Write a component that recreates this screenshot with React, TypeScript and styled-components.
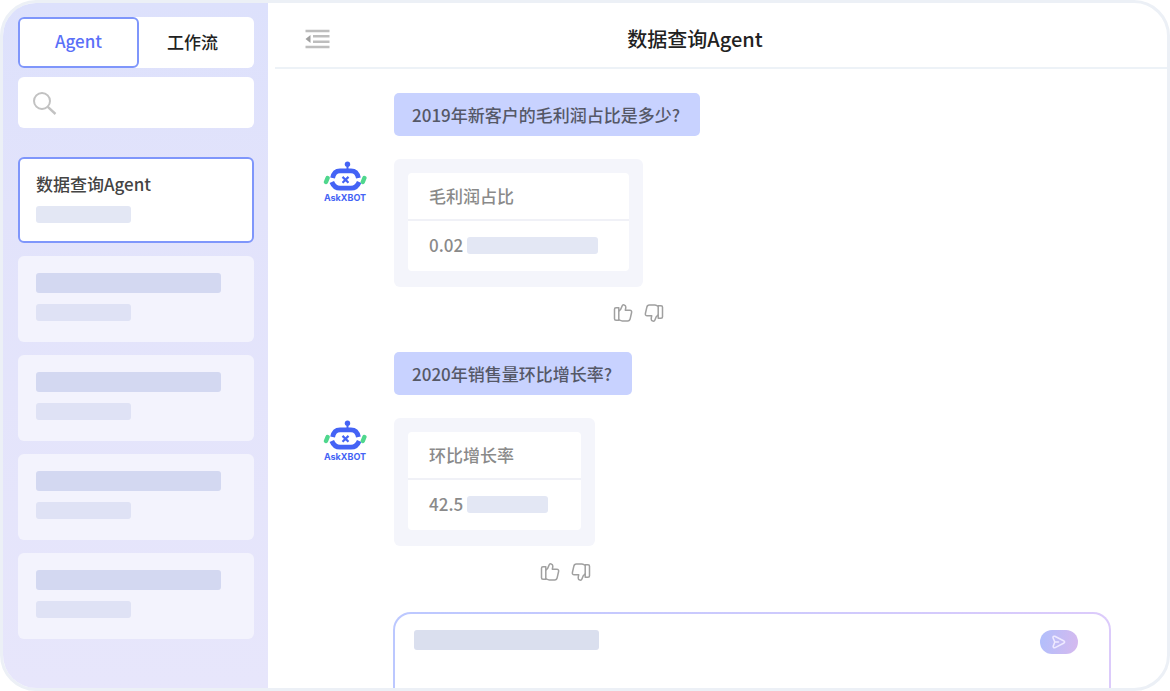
import React from "react";
import styled, { createGlobalStyle } from "styled-components";

const GlobalStyle = createGlobalStyle`
  *, *::before, *::after { box-sizing: border-box; }
  body {
    margin: 0;
    background: #fff;
    font-family: "Noto Sans CJK SC", "Noto Sans", sans-serif;
    font-size: 17px;
    line-height: 24px;
    color: #444;
  }
  button, input, textarea { font: inherit; color: inherit; }
  h1, h2, p { margin: 0; font: inherit; }
`;

const Frame = styled.div`
  display: flex;
  min-height: 100vh;
  border: 3px solid #ecf0f6;
  border-radius: 36px;
  background: #fff;
  overflow: hidden;
`;

const Sidebar = styled.aside`
  flex: 0 0 265px;
  min-width: 0;
  padding: 14px 14px 14px 15px;
  background: linear-gradient(180deg, #dde1fc 0%, #e2e3fb 30%, #e7e6fb 100%);
`;

const Tabs = styled.div`
  display: flex;
  height: 51px;
  border-radius: 6px;
  background: #fff;
`;

const Tab = styled.button<{ $active?: boolean }>`
  flex: ${(p) => (p.$active ? "0 0 121px" : "1")};
  border: ${(p) => (p.$active ? "2px solid #7f96fb" : "0")};
  border-radius: 6px;
  background: transparent;
  color: ${(p) => (p.$active ? "#5a70f8" : "#222")};
  font-weight: 500;
  padding: ${(p) => (p.$active ? "0 0 4px" : "0 8px 2px 0")};
`;

const SearchBox = styled.label`
  display: flex;
  align-items: center;
  gap: 10px;
  height: 51px;
  margin-top: 9px;
  padding: 2px 14px 0;
  border-radius: 6px;
  background: #fff;
`;

const SearchInput = styled.input`
  flex: 1;
  width: 100%;
  min-width: 0;
  border: 0;
  outline: 0;
  background: transparent;
`;

const AgentList = styled.ul`
  display: flex;
  flex-direction: column;
  gap: 13px;
  margin: 29px 0 0;
  padding: 0;
  list-style: none;
`;

const AgentCard = styled.li<{ $active?: boolean }>`
  display: flex;
  flex-direction: column;
  gap: ${(p) => (p.$active ? "10px" : "11px")};
  height: 86px;
  padding: ${(p) => (p.$active ? "13px 16px" : "17px 18px")};
  border: ${(p) => (p.$active ? "2px solid #7f96fb" : "0")};
  border-radius: 6px;
  background: ${(p) => (p.$active ? "#fff" : "#f3f3fd")};
  color: #444;
  font-weight: 500;
`;

const Bar = styled.span<{ $w: number; $h?: number; $tone: string }>`
  display: block;
  width: ${(p) => p.$w}px;
  height: ${(p) => p.$h ?? 17}px;
  border-radius: 3px;
  background: ${(p) => p.$tone};
`;

const Main = styled.main`
  flex: 1;
  min-width: 0;
  display: flex;
  flex-direction: column;
`;

const Header = styled.header`
  display: grid;
  grid-template-columns: 1fr auto 1fr;
  align-items: center;
  height: 66px;
  margin-left: 7px;
  padding: 8px 30px 0;
  border-bottom: 2px solid #edf2f7;
`;

const Title = styled.h1`
  padding-right: 52px;
  font-size: 20px;
  line-height: 28px;
  font-weight: 500;
  color: #222;
`;

const IconButton = styled.button`
  display: flex;
  width: max-content;
  padding: 0;
  border: 0;
  background: none;
  color: #a0a0a0;
`;

const Thread = styled.div`
  display: flex;
  flex-direction: column;
  gap: 29px;
  padding: 24px 56px 0 55px;
`;

const Turn = styled.section`
  display: grid;
  grid-template-columns: 44px 1fr;
  column-gap: 27px;
  justify-items: start;
`;

const Question = styled.p`
  grid-column: 2;
  margin-bottom: 23px;
  padding: 10px 20px 9px 18px;
  border-radius: 5px;
  background: #c8d2ff;
  color: #555867;
  font-weight: 500;
`;

const Avatar = styled.div`
  padding-top: 2px;
  color: #4463f5;
  font-family: Inter, sans-serif;
  font-size: 9px;
  line-height: 10px;
  font-weight: 700;
  text-align: center;

  svg { display: block; margin-bottom: 2px; }
`;

const AnswerCard = styled.div`
  padding: 14px 14px 16px;
  border-radius: 6px;
  background: #f4f5fb;
`;

const AnswerTable = styled.table<{ $w: number }>`
  width: ${(p) => p.$w}px;
  border-spacing: 0;
  border-radius: 4px;
  background: #fff;
  color: #8a8a8a;
  text-align: left;

  th, td { padding: 0 21px; font-weight: 500; }
  th { height: 48px; border-bottom: 2px solid #f0f1f7; }
  td { height: 50px; padding-bottom: 2px; }
`;

const Value = styled.div`
  display: flex;
  align-items: center;
  gap: 4px;
`;

const Feedback = styled.div<{ $indent: number }>`
  grid-column: 2;
  display: flex;
  gap: 11px;
  margin-top: 16px;
  padding-left: ${(p) => p.$indent}px;
`;

const Composer = styled.form`
  flex: 1;
  display: flex;
  align-items: flex-start;
  min-height: 75px;
  margin: 30px 56px 0 125px;
  padding: 16px 31px 0 19px;
  border: 2px solid transparent;
  border-bottom: 0;
  border-radius: 18px 18px 0 0;
  background:
    linear-gradient(#fff, #fff) padding-box,
    linear-gradient(90deg, #bcc8ff, #dccbfb) border-box;
`;

const Field = styled.label`
  flex: 1;
  display: grid;

  & > * { grid-area: 1 / 1; }
`;

const Draft = styled.textarea`
  height: 48px;
  padding: 0;
  border: 0;
  outline: 0;
  resize: none;
  background: transparent;
`;

const Send = styled.button`
  display: flex;
  align-items: center;
  justify-content: center;
  width: 38px;
  height: 24px;
  padding: 0;
  border: 0;
  border-radius: 12px;
  background: linear-gradient(100deg, #b0bffc, #d6b9ee);
  color: #eee9ff;
`;

const SearchIcon = () => (
  <svg width="25" height="25" viewBox="0 0 25 25" fill="none" stroke="#c2c2c2" strokeWidth="2" aria-hidden="true">
    <circle cx="10" cy="10" r="8" />
    <path d="M15.8 15.8 23.5 23" strokeWidth="2.4" />
  </svg>
);

const CollapseIcon = () => (
  <svg width="25" height="20" viewBox="0 0 25 20" aria-hidden="true">
    <path d="M.5 2h24M8 7.3h16.500M8 12.700h16.500M.5 18h24" stroke="#bdbdbd" strokeWidth="2.6" />
    <path d="M.5 10 5.500 6v8z" fill="#a0a0a0" />
  </svg>
);

const ThumbIcon = ({ down = false }: { down?: boolean }) => (
  <svg width="20" height="20" viewBox="0 0 20 20" fill="none" stroke="currentColor" strokeWidth="1.5" strokeLinejoin="round" aria-hidden="true">
    <g transform={down ? "rotate(180 10 10)" : undefined}>
      <path d="M5.800 4.800H3Q1.500 4.800 1.500 6.300V15.800Q1.500 17.300 3 17.300H5.800Z" />
      <path d="M5.800 8C7.800 7 8.600 4.800 9.100 3C9.600 1.300 12.800 1.400 12.800 4C12.800 5.200 12.500 6.200 12.300 7.200H16.800C18.300 7.200 18.900 8.200 18.600 9.500L17.200 15.600C16.900 17 16 17.900 14.700 17.900H9.200C7.800 17.900 7 17.300 5.800 16.800" />
    </g>
  </svg>
);

const BotIcon = () => (
  <svg width="44" height="30" viewBox="0 0 44 30" fill="none" aria-hidden="true">
    <circle cx="24.500" cy="3.200" r="2.700" fill="#4463f5" />
    <g stroke="#4463f5">
      <path d="M24.500 4v5" strokeWidth="2" />
      <path d="M9.600 17C10.400 12.500 13.200 9.800 17 9.800H28C31.800 9.800 34.600 12.500 35.400 17" strokeWidth="4.800" />
      <path d="M8.800 21C10.400 25 13.200 27.200 17 27.200H28C31.800 27.200 34.600 25 36.200 21" strokeWidth="4.800" />
      <path d="M19.500 15.900 25.500 21.700M25.500 15.900 19.500 21.700" strokeWidth="2.200" />
    </g>
    <path d="M4.600 17 3 21M41.400 17 39.800 21" stroke="#4fd78d" strokeWidth="4.400" strokeLinecap="round" />
  </svg>
);

const SendIcon = () => (
  <svg width="16" height="14" viewBox="0 0 16 14" fill="none" stroke="currentColor" strokeWidth="1.600" strokeLinejoin="round" strokeLinecap="round" aria-hidden="true">
    <path d="M3.800 1.300 13 6Q14.200 7 13 8L4.200 12.600Q2 13.300 2.200 11.200L3.800 7 2 2.800Q2 .8 3.800 1.300ZM3.800 7H7.500" />
  </svg>
);

interface Exchange {
  question: string;
  metric: string;
  value: string;
  tableWidth: number;
  barWidth: number;
  feedbackIndent: number;
}

const exchanges: Exchange[] = [
  { question: "2019年新客户的毛利润占比是多少?", metric: "毛利润占比", value: "0.02", tableWidth: 221, barWidth: 131, feedbackIndent: 219 },
  { question: "2020年销售量环比增长率?", metric: "环比增长率", value: "42.5", tableWidth: 173, barWidth: 81, feedbackIndent: 146 },
];

const ExchangeView = ({ item }: { item: Exchange }) => (
  <Turn>
    <Question>{item.question}</Question>
    <Avatar>
      <BotIcon />
      AskXBOT
    </Avatar>
    <AnswerCard>
      <AnswerTable $w={item.tableWidth}>
        <thead>
          <tr><th scope="col">{item.metric}</th></tr>
        </thead>
        <tbody>
          <tr>
            <td>
              <Value>
                {item.value}
                <Bar $w={item.barWidth} $tone="#e3e7f4" />
              </Value>
            </td>
          </tr>
        </tbody>
      </AnswerTable>
    </AnswerCard>
    <Feedback $indent={item.feedbackIndent}>
      <IconButton aria-label="赞"><ThumbIcon /></IconButton>
      <IconButton aria-label="踩"><ThumbIcon down /></IconButton>
    </Feedback>
  </Turn>
);

export default function App() {
  return (
    <>
      <GlobalStyle />
      <Frame>
        <Sidebar>
          <Tabs>
            <Tab $active>Agent</Tab>
            <Tab>工作流</Tab>
          </Tabs>
          <SearchBox>
            <SearchIcon />
            <SearchInput type="search" aria-label="搜索" />
          </SearchBox>
          <AgentList>
            <AgentCard $active>
              数据查询Agent
              <Bar $w={95} $tone="#e3e7f4" />
            </AgentCard>
            {[1, 2, 3, 4].map((n) => (
              <AgentCard key={n}>
                <Bar $w={185} $h={20} $tone="#d3d8f1" />
                <Bar $w={95} $tone="#dfe2f5" />
              </AgentCard>
            ))}
          </AgentList>
        </Sidebar>
        <Main>
          <Header>
            <IconButton aria-label="收起侧栏"><CollapseIcon /></IconButton>
            <Title>数据查询Agent</Title>
          </Header>
          <Thread>
            {exchanges.map((item) => (
              <ExchangeView key={item.question} item={item} />
            ))}
          </Thread>
          <Composer>
            <Field>
              <Bar $w={185} $h={20} $tone="#dadfee" />
              <Draft aria-label="输入问题" />
            </Field>
            <Send type="button" aria-label="发送"><SendIcon /></Send>
          </Composer>
        </Main>
      </Frame>
    </>
  );
}
